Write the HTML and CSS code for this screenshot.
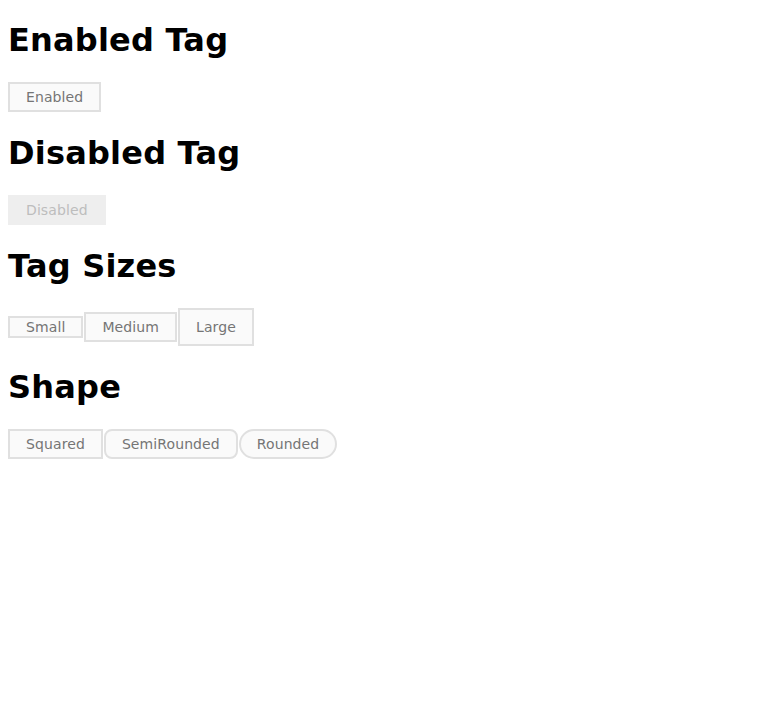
FILE: index.html
```html
<!DOCTYPE html>
<html lang="en">
<head>
<meta charset="utf-8">
<title>Tags</title>
<link rel="stylesheet" href="styles.css">
</head>
<body>
  <h1 class="title">Enabled Tag</h1>
  <div class="row">
    <span class="tag tag-md">Enabled</span>
  </div>

  <h1 class="title">Disabled Tag</h1>
  <div class="row">
    <span class="tag tag-md tag-disabled">Disabled</span>
  </div>

  <h1 class="title">Tag Sizes</h1>
  <div class="row">
    <span class="tag tag-sm">Small</span>
    <span class="tag tag-md">Medium</span>
    <span class="tag tag-lg">Large</span>
  </div>

  <h1 class="title">Shape</h1>
  <div class="row">
    <span class="tag tag-md">Squared</span>
    <span class="tag tag-md tag-semi">SemiRounded</span>
    <span class="tag tag-md tag-round">Rounded</span>
  </div>
</body>
</html>
```

FILE: styles.css
```css
html, body {
  margin: 0;
  padding: 0;
}

body {
  padding: 0 8px;
  font-family: "DejaVu Sans", sans-serif;
  background: #ffffff;
  color: #000000;
}

.title {
  font-family: "DejaVu Sans", sans-serif;
  font-size: 32px;
  line-height: 38px;
  letter-spacing: 0.2px;
  font-weight: bold;
  margin: 21px 0;
}

.row {
  display: flex;
  align-items: center;
  gap: 1px;
  padding: 2px 0 1px;
}

.tag {
  display: inline-block;
  font-family: "DejaVu Sans", sans-serif;
  font-size: 14px;
  line-height: 16px;
  letter-spacing: 0.1px;
  color: #757575;
  background: #fafafa;
  border: 2px solid #e0e0e0;
  padding: 0 16px;
  border-radius: 0;
}

.tag-sm { padding-top: 1px; padding-bottom: 1px; }
.tag-md { padding-top: 5px; padding-bottom: 5px; }
.tag-lg { padding-top: 9px; padding-bottom: 9px; }

.tag-disabled {
  color: #bdbdbd;
  background: #eeeeee;
  border-color: #eeeeee;
}

.tag-semi { border-radius: 8px; }
.tag-round { border-radius: 999px; }
```
